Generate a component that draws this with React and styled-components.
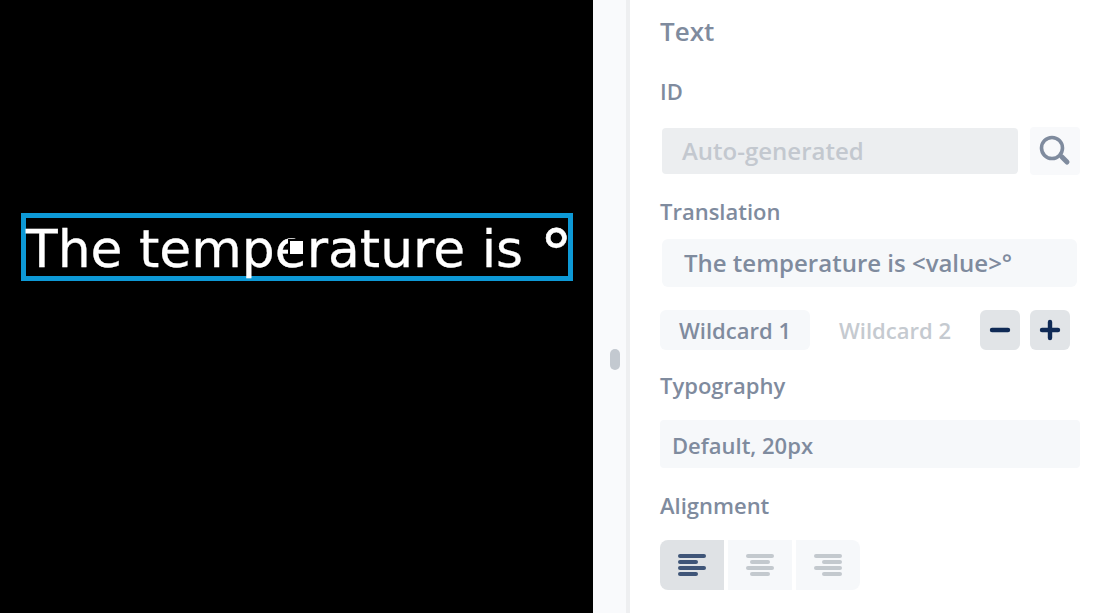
import React from 'react';
import styled, { createGlobalStyle } from 'styled-components';

const GlobalStyle = createGlobalStyle`
  html, body {
    margin: 0;
    padding: 0;
    background: #fff;
    overflow: hidden;
  }
`;

const Page = styled.div`
  display: flex;
  width: 1110px;
  height: 613px;
  overflow: hidden;
  font-family: "Open Sans", sans-serif;
  font-weight: 600;
  color: #7f8b9e;
`;

const Canvas = styled.div`
  flex: 0 0 593px;
  box-sizing: border-box;
  background: #000;
  padding: 213px 0 0 21px;
`;

const TextBox = styled.div`
  position: relative;
  box-sizing: border-box;
  width: 552px;
  height: 68px;
  border: 5px solid #0d99d6;
  color: #fff;
  font-family: "DejaVu Sans", sans-serif;
  font-weight: 400;
  font-size: 51.9px;
  line-height: 63px;
  white-space: nowrap;
  -webkit-text-stroke: 0.3px #fff;
`;

const Degree = styled.span`
  font-size: 66px;
  line-height: 0;
  vertical-align: -10px;
  -webkit-text-stroke: 0.6px #fff;
`;

const Handle = styled.span`
  position: absolute;
  left: 264px;
  top: 23px;
  width: 13px;
  height: 13px;
  background: #fff;
  box-shadow: 0 0 0 2px #000;
`;

const ScrollTrack = styled.div`
  flex: 0 0 33px;
  box-sizing: border-box;
  background: #f9fafc;
  padding: 349px 0 0 17px;
`;

const ScrollThumb = styled.div`
  width: 10px;
  height: 21px;
  border-radius: 5px;
  background: #c3c9d0;
`;

const Panel = styled.div`
  flex: 1;
  border-left: 4px solid #eeeff1;
  padding-left: 30px;
  background: #fff;
`;

const Heading = styled.h2`
  margin: 14px 0 0;
  font-size: 26px;
  line-height: 34px;
  font-weight: 600;
`;

const Label = styled.div`
  font-size: 22px;
  line-height: 28px;
  margin-top: ${(p) => p.$top}px;
`;

const Row = styled.div`
  display: flex;
  align-items: center;
  margin-top: ${(p) => p.$top}px;
`;

const ReadOnlyField = styled.div`
  box-sizing: border-box;
  width: 356px;
  height: 46px;
  margin-left: 2px;
  padding-left: 20px;
  border-radius: 4px;
  background: #eceef0;
  color: #c3c8cf;
  font-size: 24px;
  line-height: 46px;
`;

const SearchButton = styled.div`
  display: flex;
  align-items: center;
  justify-content: center;
  width: 50px;
  height: 48px;
  margin-left: 12px;
  border-radius: 4px;
  background: #f8f9fb;
`;

const TranslationField = styled.div`
  box-sizing: border-box;
  width: 415px;
  height: 48px;
  margin-left: 2px;
  padding-left: 22px;
  border-radius: 6px;
  background: #f6f8fa;
  font-size: 24px;
  line-height: 48px;
`;

const Tab = styled.div`
  box-sizing: border-box;
  width: 150px;
  height: 40px;
  padding: ${(p) => (p.$active ? '0' : '0 0 0 20px')};
  margin-right: ${(p) => p.$gap || 0}px;
  border-radius: 6px;
  background: ${(p) => (p.$active ? '#f6f8fa' : 'transparent')};
  color: ${(p) => (p.$active ? '#7f8b9e' : '#c5cad0')};
  font-size: 22px;
  line-height: 41px;
  text-align: center;
`;

const StepButton = styled.div`
  display: flex;
  align-items: center;
  justify-content: center;
  width: 40px;
  height: 40px;
  margin-right: 10px;
  border-radius: 6px;
  background: #e1e4e7;
`;

const SelectField = styled.div`
  box-sizing: border-box;
  width: 420px;
  height: 48px;
  padding-left: 12px;
  border-radius: 4px;
  background: #f6f8fa;
  font-size: 22px;
  line-height: 50px;
`;

const AlignGroup = styled.div`
  display: flex;
  gap: 4px;
  margin-top: ${(p) => p.$top}px;
`;

const AlignButton = styled.div`
  display: flex;
  align-items: center;
  justify-content: center;
  width: 64px;
  height: 50px;
  border-radius: ${(p) => (p.$active ? '8px 0 0 8px' : '0')};
  background: ${(p) => (p.$active ? '#dfe2e5' : '#f6f8fa')};
  &:last-child {
    border-radius: 0 8px 8px 0;
  }
`;

const SearchIcon = () => (
  <svg width="34" height="34" viewBox="0 0 34 34" fill="none" stroke="#7f8b9e" strokeLinecap="round">
    <circle cx="14" cy="14" r="10.5" strokeWidth="3.6" />
    <path d="M24 23 L29 28" strokeWidth="5" />
  </svg>
);

const StepIcon = ({ plus }) => (
  <svg width="22" height="22" viewBox="0 0 22 22" stroke="#0f2a56" strokeWidth="4.4" strokeLinecap="round">
    <path d="M3 11 H19" />
    {plus && <path d="M11 3 V19" />}
  </svg>
);

const AlignIcon = ({ align, color }) => {
  const lines = [28, 20, 28, 20];
  const xFor = (w) => {
    if (align === 'left') return 1;
    if (align === 'center') return 1 + (28 - w) / 2;
    return 1 + 28 - w;
  };
  return (
    <svg width="30" height="24" viewBox="0 0 30 24" stroke={color} strokeWidth="4" strokeLinecap="round">
      {lines.map((w, i) => (
        <path key={i} d={`M${xFor(w) + 2} ${3 + i * 6} h${w - 4}`} />
      ))}
    </svg>
  );
};

const App = () => (
  <Page>
    <GlobalStyle />
    <Canvas>
      <TextBox>
        The temperature is <Degree>°</Degree>
        <Handle />
      </TextBox>
    </Canvas>
    <ScrollTrack>
      <ScrollThumb />
    </ScrollTrack>
    <Panel>
      <Heading>Text</Heading>
      <Label $top={29}>ID</Label>
      <Row $top={22}>
        <ReadOnlyField>Auto-generated</ReadOnlyField>
        <SearchButton>
          <SearchIcon />
        </SearchButton>
      </Row>
      <Label $top={22}>Translation</Label>
      <Row $top={14}>
        <TranslationField>The temperature is &lt;value&gt;°</TranslationField>
      </Row>
      <Row $top={23}>
        <Tab $active>Wildcard 1</Tab>
        <Tab $gap={20}>Wildcard 2</Tab>
        <StepButton>
          <StepIcon />
        </StepButton>
        <StepButton>
          <StepIcon plus />
        </StepButton>
      </Row>
      <Label $top={21}>Typography</Label>
      <Row $top={21}>
        <SelectField>Default, 20px</SelectField>
      </Row>
      <Label $top={23}>Alignment</Label>
      <AlignGroup $top={21}>
        <AlignButton $active>
          <AlignIcon align="left" color="#3f5578" />
        </AlignButton>
        <AlignButton>
          <AlignIcon align="center" color="#c3c9ce" />
        </AlignButton>
        <AlignButton>
          <AlignIcon align="right" color="#c3c9ce" />
        </AlignButton>
      </AlignGroup>
    </Panel>
  </Page>
);

export default App;
